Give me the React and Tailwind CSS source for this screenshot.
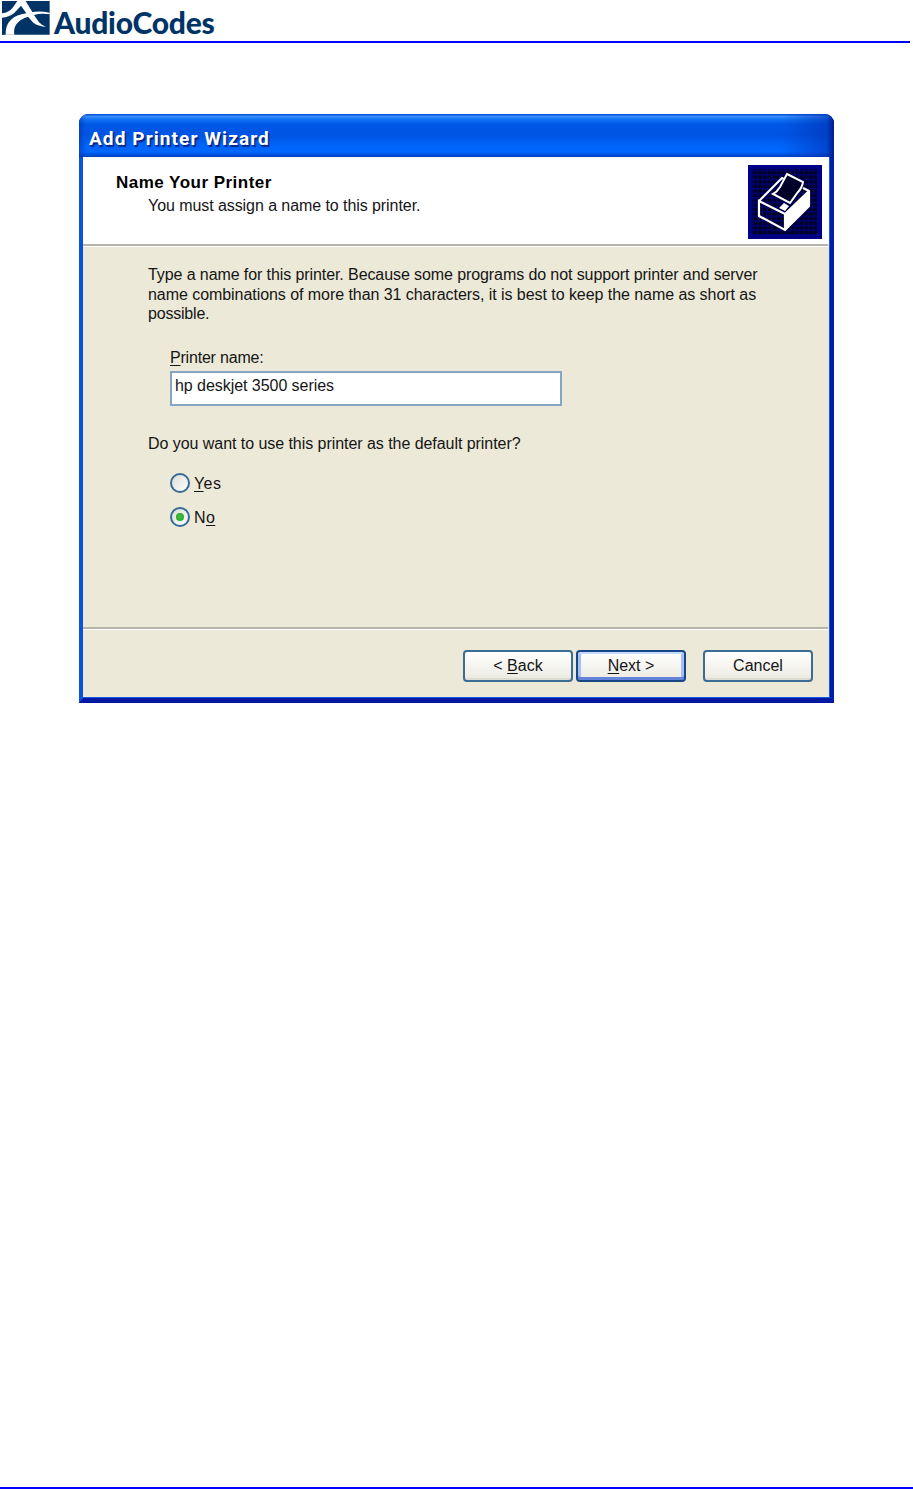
import React, { useState } from 'react';
import clsx from 'clsx';

const Logo = () => (
    <div className="flex h-[41px] items-start pl-[2px]">
        <svg width="48" height="34" viewBox="0 0 144 102" className="mt-px shrink-0">
            <path fill="#003466" d="M0 0H143V101H0Z" />
            <path
                fill="#fff"
                d="M46 0H71L91 33Q116 29 143 35V40Q116 35 96 42L111 64Q119 73 132 77Q109 76 94 65L78 47Q53 55 42 71Q34 84 37 101H11Q9 73 27 56Q43 41 73 37L57 14L36 37Q21 49 0 50V37Q21 34 32 20Z"
            />
            <path fill="#003466" d="M0 57Q11 57 20 52Q6 70 6 101H0Z" />
        </svg>
        <span className="ml-[4px] mt-[6px] whitespace-nowrap font-['Lato'] text-[30px] font-black leading-8 tracking-[-0.25px] text-[#003466]">
            AudioCodes
        </span>
    </div>
);

const PrinterIcon = () => (
    <svg width="74" height="74" viewBox="0 0 74 74" className="shrink-0">
        <defs>
            <pattern id="weave" width="4.6" height="4.6" patternUnits="userSpaceOnUse">
                <rect width="4.6" height="4.6" fill="#000014" />
                <path d="M0 .7H4.6M.7 0V4.6" stroke="#000078" strokeWidth="1.4" />
            </pattern>
        </defs>
        <rect width="74" height="74" fill="#000087" />
        <rect x="4" y="4" width="66" height="66" fill="url(#weave)" />
        <path d="M37 49L61 25V41L37 66Z" fill="#fff" />
        <path
            d="M11 36L34 13L38 15M55 23L61 26V41L37 65L11 51V36L37 49L61 26M37 49V65"
            fill="none"
            stroke="#fff"
            strokeWidth="2.2"
        />
        <path d="M39 9L55 17Q54 23 50 27L42 38L25 29Q29 27 32 22Z" fill="#000028" stroke="#fff" strokeWidth="2" />
        <path d="M36 38L41 41L37 46L31 43Z" fill="#fff" />
    </svg>
);

const Radio = ({ checked, onChange, children }) => (
    <label className="flex h-5 items-center">
        <input type="radio" name="default-printer" checked={checked} onChange={onChange} className="sr-only" />
        <span className="flex size-5 items-center justify-center rounded-full border-2 border-[#356b98] bg-linear-to-br from-[#dcdcd6] to-white">
            {checked && <span className="size-2 rounded-full bg-radial from-[#45c541] to-[#169e18]" />}
        </span>
        <span className="ml-[4px] mt-[2px] tracking-[0.4px]">{children}</span>
    </label>
);

const Button = ({ primary, className, children }) => (
    <button
        type="button"
        className={clsx(
            'flex h-8 w-[110px] items-center justify-center rounded-[4px] border-2 bg-linear-to-b from-white to-[#ebeae1]',
            primary
                ? 'border-[#174785] shadow-[inset_0_2px_#c5dafb,inset_0_-3px_#6384d9,inset_3px_0_#a4c0f4,inset_-3px_0_#a4c0f4]'
                : 'border-[#3b6c94] shadow-[inset_0_-2px_#dfddd1]',
            className,
        )}
    >
        {children}
    </button>
);

const Key = ({ children }) => <span className="underline decoration-1 underline-offset-2">{children}</span>;

const Separator = () => <div className="mr-[1px] h-[3px] shrink-0 border-t-2 border-b border-t-[#b7b5a8] border-b-white" />;

const Wizard = () => {
    const [name, setName] = useState('hp deskjet 3500 series');
    const [isDefault, setIsDefault] = useState(false);

    return (
        <section className="ml-[79px] mt-[71px] flex h-[589px] w-[755px] flex-col rounded-t-[9px] bg-linear-to-r from-[#0831d9] via-[#0a55ea] to-[#001ca5] font-['Liberation_Sans',sans-serif] text-[16px] leading-5 text-[#151515]">
            <div className="flex h-[43px] shrink-0 items-center rounded-t-[9px] bg-[linear-gradient(to_right,#0030b080_0,transparent_1%,transparent_93%,#0030b090_99%,#001c90_100%),linear-gradient(#0749d2_0,#378fff_6%,#1275f5_12%,#0058e6_24%,#0054e2_48%,#0065fb_75%,#0067ff_88%,#004bd0_97%,#003bb8_100%)] pl-[10px] pt-[6px]">
                <h1 className="whitespace-nowrap font-['Roboto'] text-[19px] font-bold tracking-[1.1px] text-white [text-shadow:1.5px_1.5px_1px_#0b2382]">
                    Add Printer Wizard
                </h1>
            </div>
            <div className="flex h-[546px] flex-col border-x-4 border-b-[5px] border-l-[#0855dd] border-r-[#001eaa] border-b-[#0019a0]">
                <div className="flex min-h-0 flex-1 flex-col border-r border-b border-[#1658e8] bg-[#ece9d8]">
                    <header className="flex h-[87px] shrink-0 justify-between bg-white pl-[33px] pr-[7px] pt-2">
                        <div className="pt-2">
                            <h2 className="whitespace-nowrap text-[17px] font-bold tracking-[0.48px] text-black">Name Your Printer</h2>
                            <p className="ml-8 mt-[3px] whitespace-nowrap tracking-[-0.07px]">You must assign a name to this printer.</p>
                        </div>
                        <PrinterIcon />
                    </header>
                    <Separator />
                    <div className="flex-1 pl-[65px] pt-[18px]">
                        <p className="whitespace-nowrap leading-[19.5px]">
                            <span className="block tracking-[-0.09px]">Type a name for this printer. Because some programs do not support printer and server</span>
                            <span className="block tracking-[-0.055px]">name combinations of more than 31 characters, it is best to keep the name as short as</span>
                            <span className="block tracking-[-0.2px]">possible.</span>
                        </p>
                        <label htmlFor="printer-name" className="ml-[22px] mt-6 block tracking-[-0.2px]">
                            <Key>P</Key>rinter name:
                        </label>
                        <input
                            id="printer-name"
                            value={name}
                            onChange={(e) => setName(e.target.value)}
                            className="ml-[22px] mt-[3px] block h-[35px] w-[392px] border-2 border-[#86a5c2] bg-white pb-[5px] pl-[3px] tracking-[-0.05px] outline-none"
                        />
                        <p className="mt-[28px] tracking-[-0.05px]">Do you want to use this printer as the default printer?</p>
                        <div className="ml-[22px] mt-[19px] flex flex-col gap-[14px]">
                            <Radio checked={isDefault} onChange={() => setIsDefault(true)}>
                                <Key>Y</Key>es
                            </Radio>
                            <Radio checked={!isDefault} onChange={() => setIsDefault(false)}>
                                N<Key>o</Key>
                            </Radio>
                        </div>
                    </div>
                    <Separator />
                    <footer className="flex h-[67px] shrink-0 justify-end pr-4 pt-[20px]">
                        <Button>&lt;&nbsp;<Key>B</Key>ack</Button>
                        <Button primary className="ml-[3px]"><Key>N</Key>ext&nbsp;&gt;</Button>
                        <Button className="ml-[17px]">Cancel</Button>
                    </footer>
                </div>
            </div>
        </section>
    );
};

const App = () => (
    <main className="flex h-[1489px] w-[913px] flex-col overflow-hidden bg-white">
        <div className="mr-[3px] h-[43px] shrink-0 border-b-2 border-[#0000ff]">
            <Logo />
        </div>
        <Wizard />
        <div className="mt-auto h-[2px] bg-[#0000ff]" />
    </main>
);

export default App;
